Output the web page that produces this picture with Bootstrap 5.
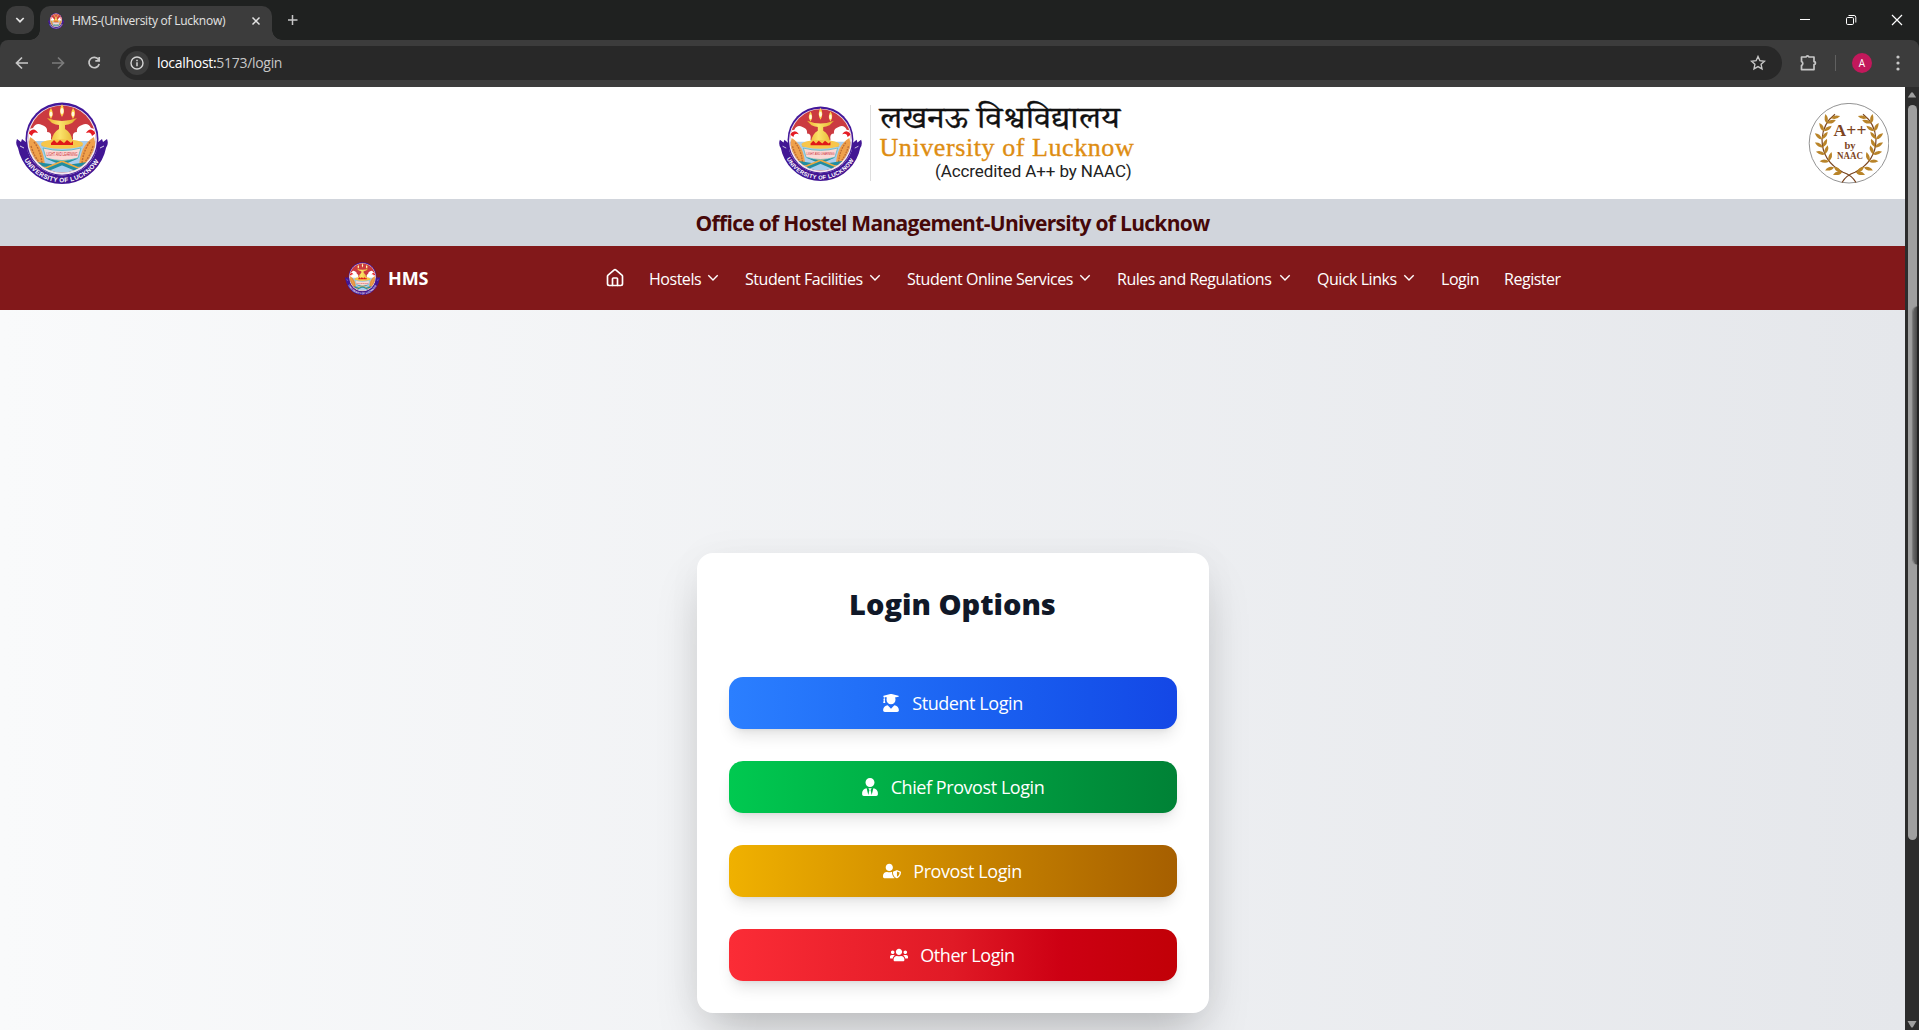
<!DOCTYPE html>
<html lang="en">
<head>
<meta charset="utf-8">
<title>HMS-(University of Lucknow)</title>
<link href="https://cdn.jsdelivr.net/npm/bootstrap@5.3.0/dist/css/bootstrap.min.css" rel="stylesheet">
<style>
body{width:1919px;height:1030px;overflow:hidden;font-family:"Open Sans","Noto Sans",sans-serif;background:#fff;color:#101828}
svg{display:block;flex:none}
.tabstrip{height:40px;background:#1f2120;color:#e3e3e3;padding-right:0}
.tab-search{width:28px;height:28px;border-radius:10px;background:#3c3c3c;margin:6px 6px 0 6px}
.tab-active{width:232px;height:34px;margin-top:6px;background:#3c3c3c;border-radius:10px 10px 0 0;padding:0 9px 5px 8px;position:relative;font-size:12px;letter-spacing:-.25px}
.tab-active::before,.tab-active::after{content:"";position:absolute;bottom:0;width:10px;height:10px}
.tab-active::before{left:-10px;background:radial-gradient(circle at 0 0,transparent 9.5px,#3c3c3c 10px)}
.tab-active::after{right:-10px;background:radial-gradient(circle at 100% 0,transparent 9.5px,#3c3c3c 10px)}
.win-btn{width:46px;height:40px}
.toolbar{height:47px;background:#3c3c3c;border-radius:8px 8px 0 0;padding:0 16px 1px 15px}
.toolbar-wrap{background:#1f2120}
.omnibox{height:34px;border-radius:17px;background:#282828;margin-left:18px;padding:0 16px 0 5px;color:#c7c7c7;font-size:14px;letter-spacing:-.3px}
.omnibox b{font-weight:400;color:#fff}
.url-text{margin-top:-2px}
.info-dot{width:24px;height:24px;border-radius:50%;background:#3c3c3c;margin-right:8px}
.avatar{width:20px;height:20px;border-radius:50%;background:#c2185b;color:#fff;font-size:10px;line-height:20px}
.viewport{height:943px}
.page{width:1905px}
.topbar{height:112px;padding:0 16px}
.center-logo{margin-right:4px}
.uni-title{width:254px;margin-left:9px;line-height:1;white-space:nowrap}
.hi{font-family:"Noto Serif Devanagari","Noto Sans Devanagari","Noto Sans",sans-serif;font-size:31px;height:30px;line-height:36px;color:#111;transform:scaleX(1.095);transform-origin:0 0;-webkit-text-stroke:.3px #111}
.en{font-family:"Liberation Serif",serif;font-size:26px;height:25px;line-height:25px;color:#de8d12;letter-spacing:.58px;-webkit-text-stroke:.35px #de8d12}
.acc{font-family:Roboto,sans-serif;font-size:17px;height:21px;line-height:22px;color:#222;letter-spacing:-.1px;padding-right:2px}
.office{height:47px;background:#d1d5dc;color:#460809;font-size:21px;font-weight:700;letter-spacing:-.69px;padding-top:2px}
.mainnav{height:64px;background:#82181a;color:#fff;padding-left:345px;font-size:16px;letter-spacing:-.47px}
.mainnav .brand{font-weight:700;font-size:18px;width:217px;letter-spacing:-.1px}
.nav-label{white-space:nowrap;padding-top:1px}
.nav-entry{gap:4px;margin-left:24px;color:#fff;text-decoration:none}
.hero{height:720px;background:linear-gradient(to right,#f9fafb,#e5e7eb);padding-top:243px}
.login-card{width:512px;height:460px;border-radius:16px;background:#fff;padding:32px;box-shadow:0 25px 50px -12px rgba(0,0,0,.25),0 0 40px rgba(0,0,0,.03)}
.login-card h2{font-size:29px;font-weight:800;line-height:36px;height:92px;margin:0;padding-top:1px;color:#101828;letter-spacing:0}
.btn-login{height:52px;width:448px;border-radius:14px;color:#fff!important;font-size:18px;gap:12px;border:0;padding:0;letter-spacing:-.43px;box-shadow:0 10px 15px -3px rgba(0,0,0,.1),0 4px 6px -4px rgba(0,0,0,.1)}
.btn-login span{padding-top:1px}
.b-blue{background:linear-gradient(to right in oklab,#2b7fff,#1447e6)}
.b-green{background:linear-gradient(to right in oklab,#00c950,#008236)}
.b-gold{background:linear-gradient(to right in oklab,#f0b100,#a65f00)}
.b-red{background:linear-gradient(to right,#fb2c36,#e01a26 50%,#cd0013 74%,#c10007)}
.scroller{width:14px;background:#2c2c2c;padding:5px 0 2px;position:relative}
.thumb{width:9px;height:735px;margin-top:7px;border-radius:5px;background:#9f9f9f}
.edge-panel{position:absolute;right:0;top:219px;width:6px;height:259px;border-radius:6px 0 0 6px;background:linear-gradient(to right,#6b6b6b,#4b4b4b 60%,#222 61%);box-shadow:-1px 0 1px #777}
</style>
</head>
<body>
<svg width="0" height="0" class="position-absolute">
<defs>
<linearGradient id="gold" x1="0" y1="0" x2="1" y2="0"><stop offset="0" stop-color="#e8960f"/><stop offset=".45" stop-color="#fbe36a"/><stop offset="1" stop-color="#d99a12"/></linearGradient>
<clipPath id="disc"><circle cx="46" cy="37" r="33.5"/></clipPath>
<path id="ribArc" d="M6.200 53.200A42.800 42.800 0 0 0 85.800 53.200" fill="none"/>
<symbol id="seal" viewBox="0 0 92 82" preserveAspectRatio="none">
<circle cx="46" cy="37" r="36.5" fill="#43189a"/><circle cx="46" cy="37.800" r="34.900" fill="#f3e7ee"/>
<g clip-path="url(#disc)">
<rect width="92" height="80" fill="#cb3a40"/><path d="M10 34q36 8 72 0v46H10z" fill="#a9cdec"/>
<path d="M10 36q-1-9 7-10q3-6 9-3q6 2 5 7q5 0 4 6v3H10zM82 36q1-9-7-10q-3-6-9-3q-6 2-5 7q-5 0-4 6v3h25z" fill="#fff"/>
<path d="M12 31q6-7 10 0q-5-2-6 3zM80 31q-6-7-10 0q5-2 6 3z" fill="#e51d24"/>
<path d="M14 35q14 8 15 30l-5 2q-15-14-10-32zM78 35q-14 8-15 30l5 2q15-14 10-32z" fill="#efa14c"/>
<path d="M18 40q7 9 8 22M15 44q3 10 8 16M74 40q-7 9-8 22M77 44q-3 10-8 16" fill="none" stroke="#bd6b32" stroke-width="1.400" stroke-dasharray="2 1"/>
<path d="M30 68l31-13M62 68L31 55M22 62l14 2M70 62l-14 2" stroke="#218da0" stroke-width="3.600" fill="none"/>
<path d="M27 67l32-13M65 67L33 54" stroke="#edaa42" stroke-width="1.800"/>
</g>
<path d="M31 16q15 6 30 0l-5 5q-4 2-7 2v4q6 3 8 13q6 1 10 4q-21 4-42 0q4-3 10-4q2-10 8-13v-4q-3 0-7-2z" fill="url(#gold)"/>
<ellipse cx="46" cy="42" rx="21" ry="4.800" fill="#f7c64b"/><path d="M35 41l3-3 3 3 3-3 4 3 3-3 4 3 2-2v4H35z" fill="#e01818"/>
<path d="M27 46q19 5 38 0l-3 10q-16 5-32 0z" fill="#fbd8d5" stroke="#51b8bd" stroke-width=".8"/>
<text x="46" y="53.500" text-anchor="middle" font-family="Liberation Sans" font-size="4.600" fill="#c92d35" textLength="31" lengthAdjust="spacingAndGlyphs">LIGHT AND LEARNING</text>
<g fill="#ffd54c"><path d="M46 2q4 7 0 13q-4-6 0-13zM35 6q3.500 6 0 11q-4-5 0-11zM57 6q4 5 0 11q-3.500-5 0-11z"/></g>
<g fill="#fff8de"><ellipse cx="46" cy="9" rx="1.600" ry="3"/><ellipse cx="35" cy="12" rx="1.400" ry="2.600"/><ellipse cx="57" cy="12" rx="1.400" ry="2.600"/></g>
<path d="M1 37l4 3 1-3 5 4 .9 9A36.500 36.500 0 0 0 80.100 50L81 41l5-4 1 3 4-3q2 5-1 9l-1.600 6A45 45 0 0 1 3.600 52L2 46Q-1 42 1 37z" fill="#421694"/>
<path d="M4 44l4 2M88 44l-4 2" stroke="#fff" stroke-width=".8"/>
<text font-family="Liberation Sans" font-weight="700" font-size="6.400" fill="#fff"><textPath href="#ribArc" startOffset="5" textLength="90">UNIVERSITY OF LUCKNOW</textPath></text>
</symbol>
<symbol id="chev" viewBox="0 0 16 16"><path d="M3.3 5.300L8 10l4.700-4.700" fill="none" stroke="currentColor" stroke-width="1.400"/></symbol>
<path id="leaf" d="M0 0q1.500-4.300 8.500-4q-2.500 5-8.500 4z"/>
</defs></svg>

<div class="tabstrip d-flex">
<div class="tab-search d-flex align-items-center justify-content-center"><svg width="10" height="10" viewBox="0 0 10 10"><path d="M1.300 3L5 6.700 8.700 3" fill="none" stroke="#e3e3e3" stroke-width="1.700"/></svg></div>
<div class="tab-active d-flex align-items-center"><svg width="16" height="16"><use href="#seal"/></svg><span class="ms-2 me-auto text-nowrap">HMS-(University of Lucknow)</span><svg width="14" height="14" viewBox="0 0 14 14"><path d="M3.500 3.500l7 7M10.500 3.500l-7 7" stroke="#e3e3e3" stroke-width="1.500"/></svg></div>
<svg width="12" height="40" viewBox="0 0 12 40" class="ms-3 me-auto"><path d="M4.500 15v10M-.5 20h10" stroke="#c7c7c7" stroke-width="1.500"/></svg>
<svg class="win-btn" viewBox="-1 0 46 40"><path d="M18 19.500h10" stroke="#fff"/></svg>
<svg class="win-btn" viewBox="-1 0 46 40" fill="none" stroke="#fff"><rect x="18.500" y="17.500" width="7" height="7" rx="1.200"/><path d="M20.500 15.500h5.500a1.800 1.800 0 0 1 1.800 1.800v5.200"/></svg>
<svg class="win-btn" viewBox="-.5 0 46 40"><path d="M18.500 15l10 10M28.500 15l-10 10" stroke="#fff" stroke-width="1.200"/></svg>
</div>
<div class="toolbar-wrap"><div class="toolbar d-flex align-items-center">
<svg width="87" height="20" viewBox="0 0 87 20" fill="none" stroke="#c7c7c7" stroke-width="1.700"><path d="M13 10H2M7 4.500L1.500 10 7 15.500"/><path d="M37 10h11M43 4.500l5.500 5.500-5.500 5.500" stroke="#7b7b7b"/><path d="M83.500 6.600A5.200 5.200 0 1 0 84.200 11M84.200 4v3.800h-3.900"/></svg>
<div class="omnibox d-flex align-items-center flex-grow-1"><span class="info-dot d-flex align-items-center justify-content-center"><svg width="14" height="14" viewBox="0 0 14 14"><circle cx="7" cy="7" r="6" fill="none" stroke="#d5d5d5" stroke-width="1.400"/><path d="M7 6.200v4M7 3.700v1.500" stroke="#d5d5d5" stroke-width="1.500"/></svg></span><span class="url-text me-auto"><b>localhost:</b>5173/login</span><svg width="16" height="16" viewBox="0 0 16 16"><path d="M8 1.500l1.900 4.200 4.600.5-3.400 3.100.900 4.600L8 11.600l-4 2.300.9-4.600L1.500 6.200l4.600-.5z" fill="none" stroke="#c7c7c7" stroke-width="1.400"/></svg></div>
<svg width="18" height="18" viewBox="1 1 18 18" style="margin-left:18px;margin-right:1px"><path d="M2.500 4h4.500a1.600 1.600 0 0 1 3 0h5v4.600a1.500 1.500 0 0 1 0 3v5H2.500v-4a2.200 2.200 0 0 0 0-4z" fill="none" stroke="#c7c7c7" stroke-width="1.700" stroke-linejoin="round"/></svg>
<span class="vr mx-3 align-self-center" style="height:16px;color:#ccc"></span>
<span class="avatar text-center">A</span>
<svg width="4" height="16" viewBox="0 0 4 16" fill="#c7c7c7" style="margin:0 3px 0 24px"><circle cx="2" cy="2" r="1.600"/><circle cx="2" cy="8" r="1.600"/><circle cx="2" cy="14" r="1.600"/></svg>
</div></div>

<div class="viewport d-flex">
<div class="page">
<header class="topbar d-flex align-items-center justify-content-between">
<svg width="92" height="82"><use href="#seal"/></svg>
<div class="center-logo d-flex align-items-center">
<svg width="83" height="75"><use href="#seal"/></svg>
<span style="width:1px;height:76px;background:#ddd;margin-left:8px"></span>
<div class="uni-title"><div class="hi">लखनऊ विश्वविद्यालय</div><div class="en">University of Lucknow</div><div class="acc text-end">(Accredited A++ by NAAC)</div></div>
</div>
<svg width="81" height="81" viewBox="-41 -40.200 81 81"><circle r="39.800" fill="#fff" stroke="#777" stroke-width=".8"/>
<g id="branch"><path d="M7 39.300Q3 32-6 29Q-27 18-27-4Q-26-20-14-29" fill="none" stroke="#7a4520" stroke-width="1.200"/>
<g fill="#b98429"><use href="#leaf" transform="translate(-7 29) rotate(190)"/><use href="#leaf" transform="translate(-15 24) rotate(60)"/><use href="#leaf" transform="translate(-15 24) rotate(185)"/><use href="#leaf" transform="translate(-20 18) rotate(-50)"/><use href="#leaf" transform="translate(-20 18) rotate(205)"/><use href="#leaf" transform="translate(-24 11) rotate(-48)"/><use href="#leaf" transform="translate(-24 11) rotate(220)"/><use href="#leaf" transform="translate(-26 4) rotate(-40)"/><use href="#leaf" transform="translate(-26 4) rotate(235)"/><use href="#leaf" transform="translate(-27-4) rotate(-28)"/><use href="#leaf" transform="translate(-27-4) rotate(245)"/><use href="#leaf" transform="translate(-25-12) rotate(-10)"/><use href="#leaf" transform="translate(-25-12) rotate(265)"/><use href="#leaf" transform="translate(-22-20) rotate(5)"/><use href="#leaf" transform="translate(-22-20) rotate(285)"/><use href="#leaf" transform="translate(-18-25) rotate(12)"/></g></g>
<use href="#branch" transform="scale(-1 1)"/>
<g font-family="Liberation Serif" font-weight="700" fill="#7d4421" text-anchor="middle"><text x="1" y="-7" font-size="17.500" textLength="33">A++</text><text x="1" y="5.500" font-size="10.500">by</text><text x="1" y="16" font-size="9.500" textLength="26" lengthAdjust="spacingAndGlyphs">NAAC</text></g></svg>
</header>
<div class="office d-flex align-items-center justify-content-center">Office of Hostel Management-University of Lucknow</div>
<nav class="mainnav d-flex align-items-center">
<svg width="35" height="33"><use href="#seal"/></svg><span class="brand ms-2">HMS</span>
<svg width="20" height="20" viewBox="0 0 24 24" fill="none" stroke="#fff" stroke-width="2" stroke-linecap="round" stroke-linejoin="round"><path d="M15 21v-8a1 1 0 0 0-1-1h-4a1 1 0 0 0-1 1v8"/><path d="M3 10a2 2 0 0 1 .709-1.528l7-5.999a2 2 0 0 1 2.582 0l7 5.999A2 2 0 0 1 21 10v9a2 2 0 0 1-2 2H5a2 2 0 0 1-2-2z"/></svg>
<a class="nav-entry d-flex align-items-center"><span class="nav-label" style="width:52px">Hostels</span><svg width="16" height="16"><use href="#chev"/></svg></a>
<a class="nav-entry d-flex align-items-center"><span class="nav-label" style="width:118px">Student Facilities</span><svg width="16" height="16"><use href="#chev"/></svg></a>
<a class="nav-entry d-flex align-items-center"><span class="nav-label" style="width:166px">Student Online Services</span><svg width="16" height="16"><use href="#chev"/></svg></a>
<a class="nav-entry d-flex align-items-center"><span class="nav-label" style="width:156px">Rules and Regulations</span><svg width="16" height="16"><use href="#chev"/></svg></a>
<a class="nav-entry d-flex align-items-center"><span class="nav-label" style="width:80px">Quick Links</span><svg width="16" height="16"><use href="#chev"/></svg></a>
<a class="nav-entry"><span class="nav-label d-block" style="width:39px">Login</span></a>
<a class="nav-entry"><span class="nav-label d-block">Register</span></a>
</nav>
<main class="hero d-flex justify-content-center align-items-start">
<section class="login-card d-flex flex-column">
<h2 class="text-center">Login Options</h2>
<div class="d-flex flex-column" style="gap:32px">
<a class="btn btn-login b-blue d-flex align-items-center justify-content-center"><svg width="18" height="18" viewBox="0 0 448 512" fill="#fff"><path d="M319.4 320.6L224 416l-95.4-95.4C57.1 323.7 0 382.2 0 454.4v9.6c0 26.5 21.5 48 48 48h352c26.5 0 48-21.5 48-48v-9.6c0-72.2-57.1-130.7-128.6-133.8zM13.6 79.8l6.4 1.5v58.4c-7 4.2-12 11.5-12 20.3 0 8.4 4.6 15.4 11.1 19.7L3.5 242c-1.7 6.900 2.100 14 7.600 14h41.800c5.500 0 9.300-7.100 7.600-14l-15.600-62.300C51.400 175.400 56 168.400 56 160c0-8.800-5-16.100-12-20.300V87.100l66 15.900c-8.600 17.200-14 36.400-14 57 0 70.700 57.300 128 128 128s128-57.300 128-128c0-20.600-5.300-39.800-14-57l96.300-23.200c18.200-4.400 18.200-27.100 0-31.500l-190.400-46c-13-3.100-26.700-3.100-39.700 0L13.600 48.200c-18.100 4.400-18.100 27.200 0 31.600z"/></svg><span>Student Login</span></a>
<a class="btn btn-login b-green d-flex align-items-center justify-content-center"><svg width="18" height="18" viewBox="0 0 448 512" fill="#fff"><path d="M224 256c70.700 0 128-57.300 128-128S294.700 0 224 0 96 57.300 96 128s57.300 128 128 128zm95.800 32.600L272 480l-32-136 32-56h-96l32 56-32 136-47.800-191.400C56.900 292 0 350.300 0 422.400V464c0 26.500 21.500 48 48 48h352c26.500 0 48-21.500 48-48v-41.600c0-72.100-56.900-130.400-128.200-133.800z"/></svg><span>Chief Provost Login</span></a>
<a class="btn btn-login b-gold d-flex align-items-center justify-content-center"><svg width="18" height="18" viewBox="0 0 640 512" fill="#fff"><path d="M622.3 271.1l-115.200-45c-4.100-1.600-12.600-3.700-22.200 0l-115.200 45c-10.700 4.200-17.700 14-17.700 24.900 0 111.600 68.700 188.800 132.900 213.900 9.600 3.700 18 1.600 22.200 0C558.400 489.900 640 420.500 640 296c0-10.900-7-20.700-17.700-24.900zM496 462.400V273.300l95.500 37.300c-5.600 87.100-60.900 135.400-95.500 151.800zM224 256c70.700 0 128-57.300 128-128S294.700 0 224 0 96 57.300 96 128s57.300 128 128 128zm96 40c0-2.500.8-4.800 1.100-7.200-2.500-.1-4.900-.8-7.500-.8h-16.700c-22.200 10.200-46.900 16-72.900 16s-50.600-5.800-72.900-16h-16.700C60.200 288 0 348.200 0 422.400V464c0 26.500 21.500 48 48 48h352c6.800 0 13.300-1.500 19.200-4-54-42.900-99.200-116.700-99.200-212z"/></svg><span>Provost Login</span></a>
<a class="btn btn-login b-red d-flex align-items-center justify-content-center"><svg width="18" height="18" viewBox="0 0 640 512" fill="#fff"><path d="M96 224c35.300 0 64-28.700 64-64s-28.700-64-64-64-64 28.700-64 64 28.700 64 64 64zm448 0c35.300 0 64-28.700 64-64s-28.700-64-64-64-64 28.700-64 64 28.700 64 64 64zm32 32h-64c-17.600 0-33.500 7.100-45.100 18.600 40.300 22.100 68.900 62 75.100 109.400h66c17.700 0 32-14.300 32-32v-32c0-35.300-28.700-64-64-64zm-256 0c61.900 0 112-50.100 112-112S381.900 32 320 32 208 82.100 208 144s50.100 112 112 112zm76.800 32h-8.300c-20.800 10-43.900 16-68.500 16s-47.600-6-68.500-16h-8.300C179.600 288 128 339.600 128 403.200V432c0 26.500 21.500 48 48 48h288c26.500 0 48-21.500 48-48v-28.800c0-63.600-51.600-115.200-115.200-115.200zm-223.700-13.400C161.500 263.100 145.600 256 128 256H64c-35.300 0-64 28.700-64 64v32c0 17.700 14.300 32 32 32h65.900c6.300-47.400 34.900-87.300 75.200-109.400z"/></svg><span>Other Login</span></a>
</div>
</section>
</main>
</div>
<aside class="scroller d-flex flex-column align-items-center">
<svg width="10" height="6" viewBox="0 0 10 6"><path d="M.8 5.500L4 .8Q5-.2 6 .8L9.200 5.500z" fill="#9f9f9f"/></svg>
<div class="thumb"></div>
<svg width="10" height="7" viewBox="0 0 10 7" class="mt-auto"><path d="M.5 0h9L6 6Q5 7 4 6z" fill="#9f9f9f"/></svg>
<div class="edge-panel"></div>
</aside>
</div>
<script src="https://cdn.jsdelivr.net/npm/bootstrap@5.3.0/dist/js/bootstrap.bundle.min.js"></script>
</body>
</html>
